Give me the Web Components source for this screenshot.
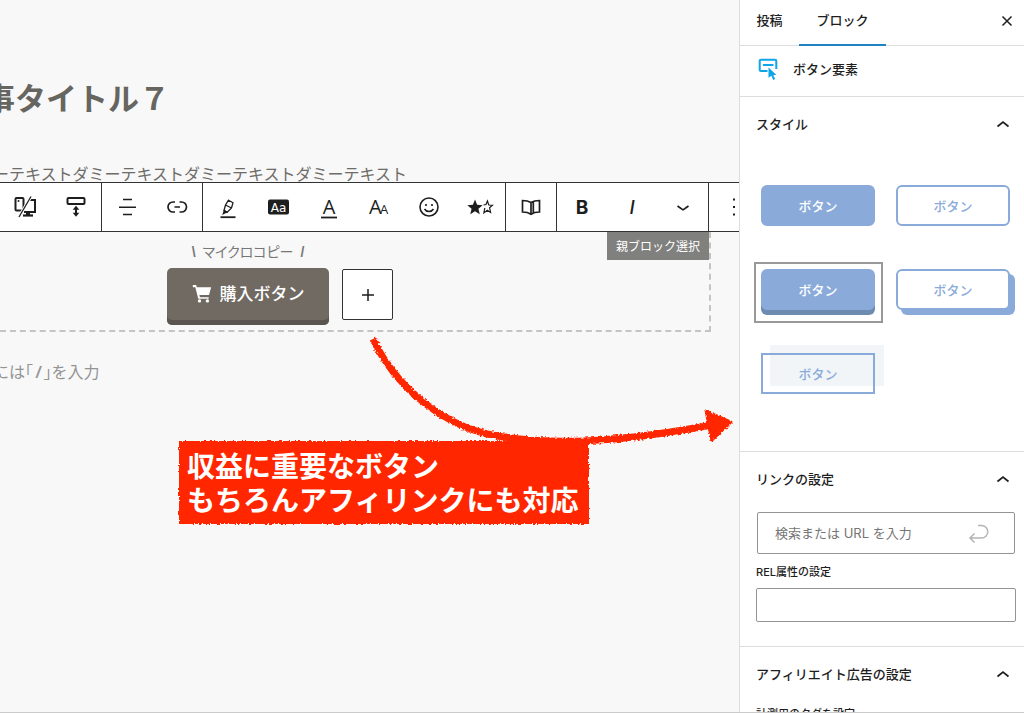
<!DOCTYPE html>
<html lang="ja">
<head>
<meta charset="utf-8">
<title>ブロックエディター</title>
<style>
html,body{margin:0;height:100%;}
body{font-family:"Liberation Sans","Noto Sans CJK JP",sans-serif;color:#1e1e1e;background:#fff;overflow:hidden;}
</style>
</head>
<body>
<editor-app></editor-app>
<script>
const define=(name,html,setup)=>customElements.define(name,class extends HTMLElement{
  constructor(){super();const r=this.attachShadow({mode:'open'});r.innerHTML=html;}
  connectedCallback(){if(setup&&!this.ready){this.ready=true;setup(this,this.shadowRoot);}}
});

const ICONS={
device:`<g fill="none" stroke="#1e1e1e" stroke-width="2"><rect x="2.500" y="3" width="8" height="12.500" rx="1"/><path d="M15.500 5H22v12H11"/><path d="M10 20.500h10" stroke-width="2.200"/><path d="M15 17v3" stroke-width="4"/></g><circle cx="5.500" cy="6" r="1" fill="#1e1e1e"/><path d="M18 1.500L6 22" stroke="#fff" stroke-width="3"/><path d="M18 1.500L6 22" stroke="#1e1e1e" stroke-width="1.300"/>`,
space:`<rect x="3.500" y="3" width="17" height="6" rx="1" fill="none" stroke="#1e1e1e" stroke-width="2"/><path d="M12 12v8" stroke="#1e1e1e" stroke-width="2"/><path d="M12 10.800l3.300 4H8.700zM12 21.800l3.300-4H8.700z" fill="#1e1e1e"/>`,
align:`<path d="M8 4.500h9M4 12.200h17M8 19.500h9" stroke="#1e1e1e" stroke-width="1.600" fill="none"/>`,
link:`<path d="M10 7H8a5 5 0 0 0 0 10H10M14.500 7h2a5 5 0 0 1 0 10H14.500M9.500 12h5.500" stroke="#1e1e1e" stroke-width="1.700" fill="none"/>`,
marker:`<path d="M4.500 22.200h15" stroke="#1e1e1e" stroke-width="1.800"/><path d="M12.500 5.200l4.500 2.600-1.500 5.200-4.500 4.500-3-2 1.500-5.500zM9.500 10l6 3" fill="none" stroke="#1e1e1e" stroke-width="1.300"/><path d="M8 14.500l4 2.500-5.800 3z" fill="#1e1e1e"/>`,
badge:`<rect x="2" y="4.500" width="21" height="15" rx="2" fill="#1e1e1e"/><text x="12.500" y="16.500" text-anchor="middle" font-family="DejaVu Sans" font-size="12" fill="#fff">Aa</text>`,
color:`<text x="12" y="19" text-anchor="middle" font-family="Open Sans" font-size="20" fill="#1e1e1e">A</text><path d="M4 22.500h16" stroke="#1e1e1e" stroke-width="1.800"/>`,
size:`<text x="2" y="19" font-family="Open Sans" font-size="20" fill="#1e1e1e">A</text><text x="13" y="19" font-family="Open Sans" font-size="13" fill="#1e1e1e">A</text>`,
smile:`<circle cx="12" cy="12" r="9" fill="none" stroke="#1e1e1e" stroke-width="1.600"/><circle cx="9" cy="10" r="1.100" fill="#1e1e1e"/><circle cx="15" cy="10" r="1.100" fill="#1e1e1e"/><path d="M7.500 14c2 3.300 7 3.300 9 0" fill="none" stroke="#1e1e1e" stroke-width="1.500"/>`,
stars:`<path d="M7 4.500l2.100 5.300 5.600.4-4.300 3.600 1.400 5.500L7 16.300l-4.800 3 1.400-5.500-4.300-3.600 5.600-.4z" fill="#1e1e1e"/><path d="M15.500 10l2.500-.5 1.400-3.500 1.400 4 3.700.3-2.900 2.500 1 4.700-3.300-2.300-3.400 2.700.9-4.900" fill="none" stroke="#1e1e1e" stroke-width="1.200"/>`,
book:`<path d="M12 7.500C9.500 6 6 5.500 3.500 5.500v11.500c3 0 6 .5 8.500 2.200 2.500-1.700 5.500-2.200 8.500-2.200V5.500c-3 0-6 .5-8.500 2zM12 7.500v11.500M14.300 7v11" fill="none" stroke="#1e1e1e" stroke-width="1.700"/>`,
bold:`<text x="12" y="19" text-anchor="middle" font-family="Inter" font-weight="700" font-size="19" fill="#1e1e1e">B</text>`,
italic:`<text x="12" y="19" text-anchor="middle" font-family="Inter,Liberation Sans" font-style="italic" font-weight="500" font-size="19" fill="#1e1e1e">I</text>`,
down:`<path d="M6.500 11c2 1.500 3.500 2.500 5.500 3.800 2-1.300 3.500-2.300 5.500-3.800" fill="none" stroke="#1e1e1e" stroke-width="1.600"/>`,
dots:`<path d="M11 3.500h2v2h-2zM11 11h2v2h-2zM11 18.500h2v2h-2z" fill="#1e1e1e"/>`,
up:`<path d="M6.500 14.500L12 10l5.500 4.500" fill="none" stroke="#1e1e1e" stroke-width="1.700"/>`,
close:`<path d="M7.500 7.500l9 9M16.500 7.500l-9 9" stroke="#1e1e1e" stroke-width="1.500"/>`,
plus:`<path d="M12 6v12M6 12h12" stroke="#1e1e1e" stroke-width="1.500"/>`,
enter:`<path d="M12 4.500h3.500a5.300 5.300 0 0 1 0 12.500H4.500M8.500 12.500L4 17l4.500 4.500" fill="none" stroke="#b4b4b4" stroke-width="1.500"/>`,
element:`<path d="M11.500 15H5a1.300 1.300 0 0 1-1.300-1.300V5A1.300 1.300 0 0 1 5 3.700h14A1.300 1.300 0 0 1 20.300 5v8M7 9h10.500" fill="none" stroke="#0ea5e9" stroke-width="2"/><path d="M12.500 11.500l8 7.500-3.300.1 2 4-2 .9-1.800-4.200-2.900 2z" fill="#0ea5e9"/>`,
cart:`<path d="M1 2.500h4l.8 2.500H23l-2.600 9.500H8.800L9.500 17H20v2H7.500L4 5H1z" fill="#fff"/><circle cx="9" cy="21.500" r="2" fill="#fff"/><circle cx="18.500" cy="21.500" r="2" fill="#fff"/>`
};

define('icon-glyph',`<style>:host{display:block;width:24px;height:24px;flex:none}svg{display:block;overflow:visible;width:100%;height:100%}</style><svg viewBox="0 0 24 24" aria-hidden="true"></svg>`,
 (h,r)=>{r.querySelector('svg').innerHTML=ICONS[h.getAttribute('name')];});

define('tool-button',`<style>:host{display:flex;flex:1 0 0}button{flex:1;border:0;padding:0;background:none;display:flex;align-items:center;justify-content:center}</style><button type="button"><icon-glyph></icon-glyph></button>`,
 (h,r)=>{r.querySelector('button').setAttribute('aria-label',h.getAttribute('label'));const i=document.createElement('icon-glyph');i.setAttribute('name',h.getAttribute('icon'));r.querySelector('icon-glyph').replaceWith(i);});

define('tool-group',`<style>:host{display:flex;box-sizing:border-box;border-right:1px solid #333;flex:none}</style><slot></slot>`);

define('block-toolbar',`<style>:host{display:flex;height:48px;background:#fff;border:solid #333;border-width:1px 0;position:relative;z-index:1}
.first{width:102px}.pair{width:101px}.six{width:303px}.one{width:51px}.three{width:152px}.more{width:50px}</style>
<tool-group class="first"><tool-button icon="device" label="表示デバイス"></tool-button><tool-button icon="space" label="余白"></tool-button></tool-group>
<tool-group class="pair"><tool-button icon="align" label="配置"></tool-button><tool-button icon="link" label="リンク"></tool-button></tool-group>
<tool-group class="six"><tool-button icon="marker" label="マーカー"></tool-button><tool-button icon="badge" label="バッジ"></tool-button><tool-button icon="color" label="文字色"></tool-button><tool-button icon="size" label="文字サイズ"></tool-button><tool-button icon="smile" label="絵文字"></tool-button><tool-button icon="stars" label="評価"></tool-button></tool-group>
<tool-group class="one"><tool-button icon="book" label="ふりがな"></tool-button></tool-group>
<tool-group class="three"><tool-button icon="bold" label="太字"></tool-button><tool-button icon="italic" label="イタリック"></tool-button><tool-button icon="down" label="さらに表示"></tool-button></tool-group>
<tool-group class="more"><tool-button icon="dots" label="オプション"></tool-button></tool-group>`);

define('button-block',`<style>
:host{display:block;position:relative;box-sizing:border-box;height:100px;margin-right:28px;border:dashed #c4c4c4;border-width:0 2px 2px 0}
.row{display:flex;align-items:flex-start;gap:13px;padding:8px 0 0 167px}
.cta{display:flex;flex-direction:column;align-items:center;gap:4px;width:162px}
.copy{font-size:14px;line-height:24px;color:#777;font-feature-settings:"palt"}
.copy b{font-weight:700;margin:0 7px}
.buy{display:flex;align-items:center;justify-content:center;gap:8px;width:100%;height:57px;border:0;border-radius:5px;background:#716a63;box-shadow:inset 0 -5px #5a554f;color:#fff;font:500 17px/24px "Noto Sans CJK JP",sans-serif;padding:0 0 7px}
.buy icon-glyph{width:20px;height:20px}
.add{display:flex;align-items:center;justify-content:center;width:51px;height:51px;margin-top:29px;padding:0;background:#fff;border:1px solid #333;border-radius:2px}
.parent{position:absolute;right:0;top:0;height:28px;padding:0;width:102px;border:0;background:#80807e;color:#fff;font:400 12px/28px "Noto Sans CJK JP",sans-serif}
</style>
<button type="button" class="parent">親ブロック選択</button>
<div class="row"><div class="cta"><span class="copy"><b>\\</b>マイクロコピー<b>/</b></span>
<button type="button" class="buy"><icon-glyph name="cart"></icon-glyph>購入ボタン</button></div>
<button type="button" class="add" aria-label="ブロックを追加"><icon-glyph name="plus"></icon-glyph></button></div>`);

define('callout-note',`<style>
:host{position:absolute;left:0;top:330px;width:739px;z-index:2;pointer-events:none}
svg{display:block;overflow:visible}
p{position:absolute;left:187px;top:118px;margin:0;color:#fff;font:700 28px/34px "Noto Sans CJK JP",sans-serif;white-space:nowrap}
</style>
<svg width="739" height="210" aria-hidden="true"><defs><filter id="rough" x="-5%" y="-5%" width="110%" height="110%"><feTurbulence type="fractalNoise" baseFrequency=".5" numOctaves="2" seed="4"/><feDisplacementMap in="SourceGraphic" scale="4" xChannelSelector="R" yChannelSelector="G"/></filter></defs>
<g filter="url(#rough)"><rect x="179" y="111" width="410" height="83" fill="#ff2600"/><path d="M373 9C394 54 438 92 487 104C555 118 630 110 712 95" fill="none" stroke="#ff2600" stroke-width="7"/><path d="M706 81L731 92L712 110Z" fill="#ff2600" stroke="#ff2600" stroke-width="3" stroke-linejoin="round"/></g></svg>
<p><slot></slot></p>`);

define('editor-canvas',`<style>
:host{display:block;position:relative;overflow:hidden;background:#f8f8f8;min-width:0;white-space:nowrap}
h1{margin:73px 0 0 -16px;font:700 31px/48px "Noto Sans CJK JP",sans-serif;color:#666560}
p{margin:0 0 0 -7px;font-size:16px;color:#6e6c68}
.text{padding-top:46px;line-height:15px}
.hint{padding-top:29px;line-height:24px;color:#949494}
.hint span{font-feature-settings:"halt"}.hint i{font-weight:700;padding:0 3px}
</style>
<h1>事タイトル７</h1>
<p class="text">ーテキストダミーテキストダミーテキストダミーテキスト</p>
<block-toolbar></block-toolbar>
<button-block></button-block>
<p class="hint">には<span>「</span><i>/</i><span>」</span>を入力</p>
<callout-note>収益に重要なボタン<br>もちろんアフィリンクにも対応</callout-note>`);

define('settings-panel',`<style>
:host{display:block;border-bottom:1px solid #ddd}
h2{margin:0;font-size:0}
button{display:flex;align-items:center;justify-content:space-between;width:100%;height:54px;border:0;background:none;padding:0 9px 0 16px;color:#1e1e1e;font:500 13px/20px "Noto Sans CJK JP",sans-serif}
</style><h2><button type="button" aria-expanded="true"><span></span><icon-glyph name="up"></icon-glyph></button></h2><slot></slot>`,
 (h,r)=>{r.querySelector('span').textContent=h.getAttribute('heading');});

define('style-option',`<style>
:host{display:block;box-sizing:border-box;height:61px;border:2px solid transparent;padding:5px 6px 5px 5px;isolation:isolate}
:host([selected]){border-color:#999}
button{display:block;position:relative;box-sizing:border-box;width:100%;height:41px;border:2px solid #8aabda;border-radius:6px;background:#fff;color:#8aabda;padding:0;font:500 13px/20px "Noto Sans CJK JP",sans-serif}
:host([look=fill]) button,:host([look=solid]) button{background:#8aabda;color:#fff}
:host([look=solid]) button{box-shadow:0 5px #6d8bb1}
:host([look=shift]) button{box-shadow:5px 5px #8aabda}
:host([look=offset]) button{border-radius:0;background:none}
:host([look=offset]) button::before{content:"";position:absolute;z-index:-1;left:7px;top:-10px;width:100%;height:100%;padding:2px;background:#f1f5f8}
</style><button type="button"><slot></slot></button>`);

define('settings-sidebar',`<style>
:host{display:block;overflow:hidden;background:#fff;border-left:1px solid #ddd;font-family:"Noto Sans CJK JP",sans-serif;font-size:13px}
.tabs{display:flex;height:45px;border-bottom:1px solid #ddd;align-items:stretch}
.tabs button{border:0;background:none;padding:0 0 5px;font:500 13px/20px "Noto Sans CJK JP",sans-serif;color:#1e1e1e}
.tabs .tab{width:59px}.tabs .tab[aria-selected=true]{width:87px;box-shadow:0 1px #1f82c2,inset 0 -1px #1f82c2}
.tabs .close{margin-left:auto;display:flex;align-items:center;width:29px;padding-bottom:4px}
.card{display:flex;align-items:center;gap:13px;height:51px;padding:0 16px 6px;box-sizing:border-box;border-bottom:1px solid #ddd;font-weight:500}
.styles{display:grid;grid-template-columns:129px 129px;gap:23px 6px;padding:27px 6px 44px 14px}
.form{display:flex;flex-direction:column;padding:6px 8px 24px 16px}
.url{display:flex;align-items:center;height:42px;box-sizing:border-box;border:1px solid #949494;border-radius:2px;padding:0 24px 0 17px;margin:0 1px}
.url input{flex:1;min-width:0;border:0;padding:0;outline:0;background:none;font:400 13px/20px "Inter","Noto Sans CJK JP",sans-serif}
.url input::placeholder{color:#757575;opacity:1}
label{font:500 11px/20px "Inter","Noto Sans CJK JP",sans-serif;margin:8px 0 6px}
.rel{height:34px;box-sizing:border-box;width:100%;border:1px solid #949494;border-radius:2px}
.send{border:0;background:none;padding:0}
.tag{padding:0 16px;line-height:24px;font-size:11px;font-weight:500}
</style>
<div class="tabs" role="tablist"><button type="button" class="tab" role="tab">投稿</button><button type="button" class="tab" role="tab" aria-selected="true">ブロック</button><button type="button" class="close" aria-label="設定を閉じる"><icon-glyph name="close"></icon-glyph></button></div>
<div class="card"><icon-glyph name="element"></icon-glyph><span>ボタン要素</span></div>
<settings-panel heading="スタイル"><div class="styles">
<style-option look="fill">ボタン</style-option><style-option look="line">ボタン</style-option>
<style-option look="solid" selected>ボタン</style-option><style-option look="shift">ボタン</style-option>
<style-option look="offset">ボタン</style-option></div></settings-panel>
<settings-panel heading="リンクの設定"><div class="form"><div class="url"><input aria-label="URL" placeholder="検索または URL を入力"><button type="button" class="send" aria-label="送信"><icon-glyph name="enter"></icon-glyph></button></div>
<label for="rel">REL属性の設定</label><input id="rel" class="rel"></div></settings-panel>
<settings-panel heading="アフィリエイト広告の設定"><div class="tag">計測用のタグを設定</div></settings-panel>`);

define('editor-app',`<style>:host{display:grid;grid-template-columns:minmax(0,1fr) 285px;grid-template-rows:minmax(0,1fr);height:calc(100vh - 1px);box-sizing:border-box;border-bottom:1px solid #ccc}</style><editor-canvas></editor-canvas><settings-sidebar></settings-sidebar>`);
</script>
</body>
</html>
